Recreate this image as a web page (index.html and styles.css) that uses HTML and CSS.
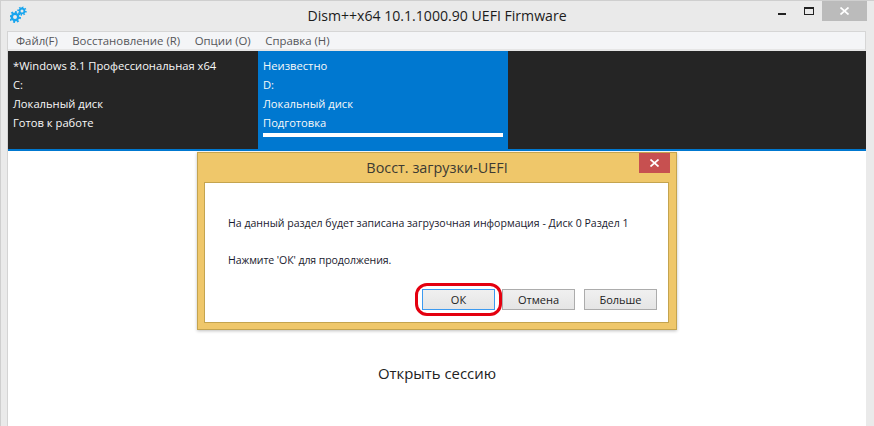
FILE: index.html
```html
<!DOCTYPE html>
<html lang="ru">
<head>
<meta charset="utf-8">
<title>Dism++</title>
<link rel="stylesheet" href="styles.css">
</head>
<body>
<div class="window">
  <header class="titlebar">
    <svg class="app-icon" width="20" height="18" viewBox="0 0 20 18">
      <circle class="gear-body" cx="5" cy="11" r="3.200"/>
      <circle class="gear-teeth" cx="5" cy="11" r="5" pathLength="16"/>
      <circle class="gear-body small" cx="12" cy="5" r="2.400"/>
      <circle class="gear-teeth small" cx="12" cy="5" r="3.900" pathLength="16"/>
    </svg>
    <div class="title">Dism++x64 10.1.1000.90 UEFI Firmware</div>
    <div class="controls">
      <span class="ctl"><span class="min-glyph"></span></span>
      <span class="ctl"><span class="max-glyph"></span></span>
      <span class="ctl close"><svg width="9" height="8" viewBox="0 0 9 8"><path d="M0.500 0.500L8.500 7.500M8.500 0.500L0.500 7.500"/></svg></span>
    </div>
  </header>
  <div class="client">
    <nav class="menu">
      <span>Файл(F)</span>
      <span>Восстановление (R)</span>
      <span>Опции (O)</span>
      <span>Справка (H)</span>
    </nav>
    <section class="slots">
      <div class="slot">
        <div>*Windows 8.1 Профессиональная x64</div>
        <div>C:</div>
        <div>Локальный диск</div>
        <div>Готов к работе</div>
      </div>
      <div class="slot active">
        <div>Неизвестно</div>
        <div>D:</div>
        <div>Локальный диск</div>
        <div>Подготовка</div>
        <div class="progress"></div>
      </div>
    </section>
    <main class="session">Открыть сессию</main>
  </div>
</div>
<div class="dialog">
  <div class="dialog-title">Восст. загрузки-UEFI</div>
  <span class="dialog-close"><svg width="9" height="8" viewBox="0 0 9 8"><path d="M0.500 0.500L8.500 7.500M8.500 0.500L0.500 7.500"/></svg></span>
  <div class="dialog-body">
    <p class="msg-one">На данный раздел будет записана загрузочная информация - Диск 0 Раздел 1</p>
    <p class="msg-two">Нажмите 'ОК' для продолжения.</p>
    <div class="buttons">
      <button class="btn default">ОК</button>
      <button class="btn">Отмена</button>
      <button class="btn more">Больше</button>
    </div>
  </div>
</div>
<div class="highlight"></div>
</body>
</html>
```
FILE: styles.css
```css
* { box-sizing: border-box; }
html, body { margin: 0; height: 100%; }
body {
  width: 874px;
  height: 426px;
  overflow: hidden;
  position: relative;
  font-family: "Open Sans", "Noto Sans", sans-serif;
  font-size: 11px;
  background: #eaeaea;
}
.window {
  height: 426px;
  display: flex;
  flex-direction: column;
  padding: 1px 8px 0 6px;
  border-top: 1px solid #cfcfcf;
  border-left: 1px solid #cfcfcf;
}
.titlebar {
  height: 29px;
  display: flex;
  position: relative;
  align-items: flex-start;
  justify-content: center;
  flex: none;
}
.app-icon { position: absolute; left: 3px; top: 4px; }
.gear-body { fill: none; stroke: #18a5ee; stroke-width: 2.400; }
.gear-teeth { fill: none; stroke: #18a5ee; stroke-width: 2; stroke-dasharray: 1 1; }
.gear-body.small { stroke-width: 1.800; }
.gear-teeth.small { stroke-width: 1.600; }
.title { font-size: 14.100px; color: #1c1c1c; line-height: 20px; margin-top: 4px; margin-left: 1px; }
.controls { position: absolute; right: -1px; top: -1px; display: flex; height: 20px; }
.ctl { width: 28px; padding-left: 2px; display: flex; align-items: center; justify-content: center; }
.ctl.close { width: 45px; height: 20px; padding-left: 0; background: #bbbbbb; }
.close svg, .dialog-close svg { fill: none; stroke: #fff; stroke-width: 1.700; }
.min-glyph { width: 8px; height: 2px; background: #222; margin-top: 6px; margin-left: 2px; }
.max-glyph { width: 10px; height: 8px; border: 1px solid #222; border-top-width: 2px; }
.client {
  flex: 1;
  display: flex;
  flex-direction: column;
  background: #fff;
  border-left: 1px solid #d4d4d4;
  min-height: 0;
}
.menu {
  height: 20px;
  flex: none;
  display: flex;
  gap: 14.500px;
  padding: 0 8px 1px;
  align-items: center;
  font-size: 11.400px;
  color: #55565a;
  background: #f4f5f7;
  border-top: 1px solid #d6d6d6;
  border-right: 1px solid #d6d6d6;
  border-bottom: 2px solid #e6e6e6;
}
.slots {
  height: 100px;
  flex: none;
  display: flex;
  font-size: 11.200px;
  background: #252525;
  border-bottom: 2px solid #0078d0;
  color: #f8f8f8;
}
.slot { width: 250px; padding: 5px 5px 0; line-height: 19px; }
.slot.active { background: #0078d0; }
.progress { height: 4px; background: #fff; margin-top: 1px; }
.session {
  flex: 1;
  text-align: center;
  padding-top: 211px;
  font-size: 14.900px;
  line-height: 22px;
  color: #222;
}
.dialog {
  position: absolute;
  left: 197px;
  top: 152px;
  width: 480px;
  height: 178px;
  background: #efc76a;
  border: 1px solid #c4a44f;
  box-shadow: 0 1px 3px rgba(0,0,0,.25);
  display: flex;
  flex-direction: column;
}
.dialog-title {
  height: 29px;
  flex: none;
  text-align: center;
  font-size: 14.400px;
  line-height: 30px;
  color: #3c3a33;
}
.dialog-close {
  position: absolute;
  right: 6px;
  top: 0;
  width: 31px;
  height: 20px;
  background: #c75050;
  display: flex;
  align-items: center;
  justify-content: center;
}
.dialog-body {
  margin: 0 7px 6px 6px;
  flex: 1;
  background: #fff;
  border: 1px solid #c4a44f;
  position: relative;
  padding: 31px 23px 0;
  color: #1a1a2e;
  font-size: 10.560px;
}
.dialog-body p { margin: 0; line-height: 18px; }
.dialog-body .msg-two { margin-top: 19px; letter-spacing: -0.080px; }
.buttons {
  position: absolute;
  right: 11px;
  bottom: 12px;
  display: flex;
  gap: 7px;
}
.btn {
  width: 73px;
  height: 21px;
  padding: 0;
  font: 11px "Open Sans", "Noto Sans", sans-serif;
  color: #222;
  background: linear-gradient(#f0f0f0, #e5e5e5);
  border: 1px solid #acacac;
}
.btn.default { border-color: #3c9af0; }
.btn.more { margin-left: 2px; }
.highlight {
  position: absolute;
  left: 415px;
  top: 283px;
  width: 87px;
  height: 33px;
  border: 3px solid #e4000f;
  border-radius: 12px;
}
```
